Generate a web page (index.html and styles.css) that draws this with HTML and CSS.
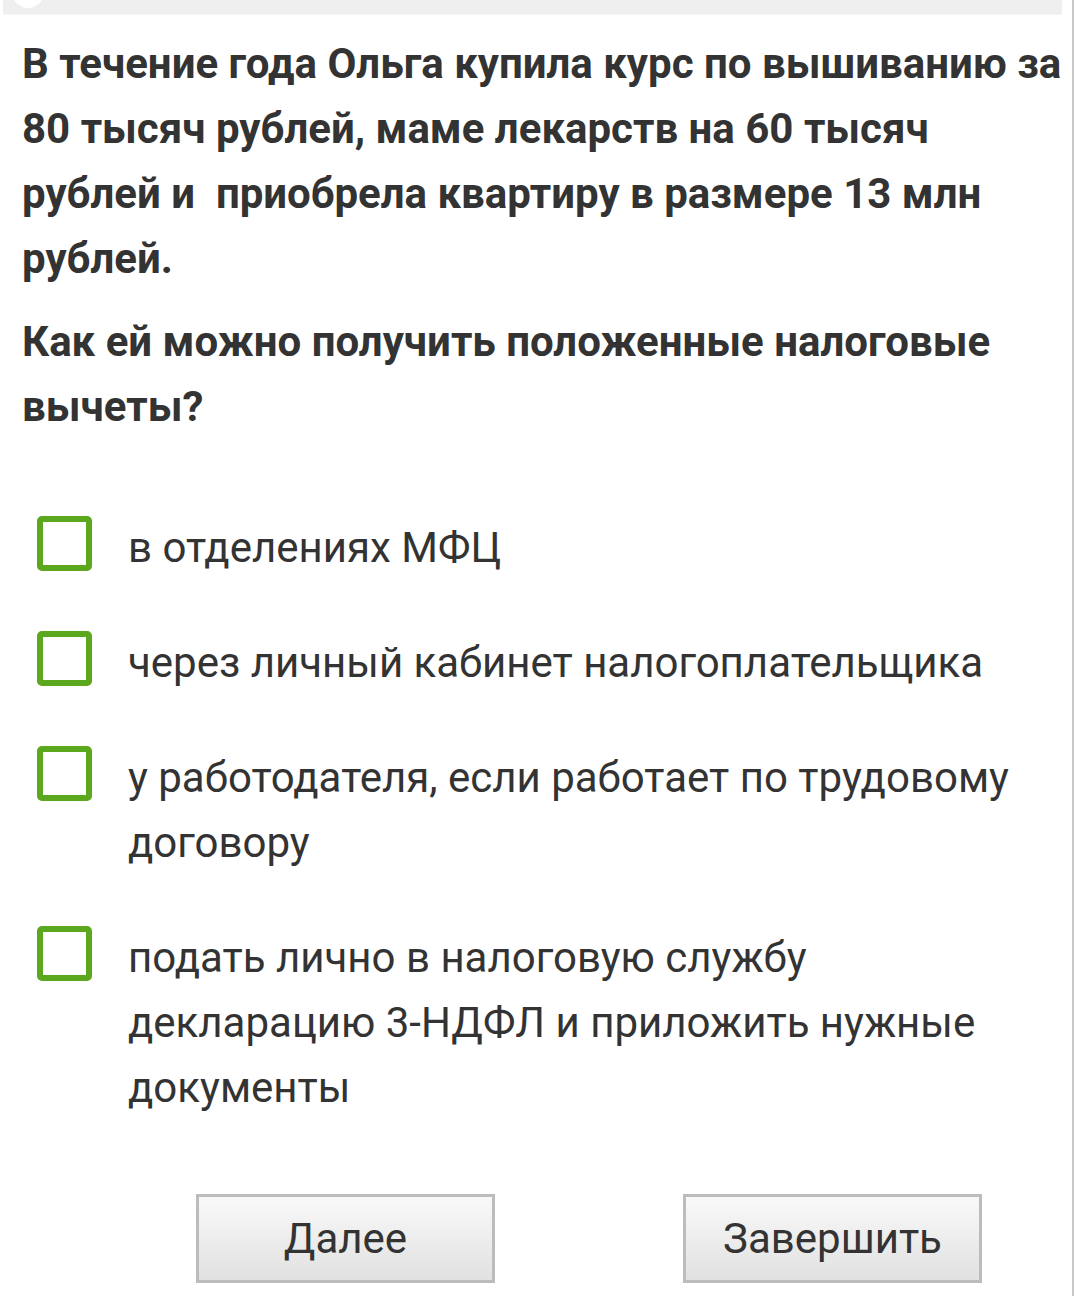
FILE: index.html
```html
<!DOCTYPE html>
<html lang="ru">
<head>
    <meta charset="UTF-8">
    <meta name="viewport" content="width=device-width, initial-scale=1.0">
    <title>Тест: налоговые вычеты</title>
    <link rel="stylesheet" href="styles.css">
</head>
<body>

    <div class="page">
        <!-- Header strip -->
        <div class="topbar">
            <span class="avatar"></span>
        </div>

        <!-- Question -->
        <div class="question">
            <p>В течение года Ольга купила курс по вышиванию за 80 тысяч рублей, маме лекарств на 60 тысяч рублей и&nbsp; приобрела квартиру в размере 13 млн рублей.</p>
            <p>Как ей можно получить положенные налоговые вычеты?</p>
        </div>

        <!-- Answers -->
        <ul class="answers">
            <li><span class="check"></span><span class="answer-text">в отделениях МФЦ</span></li>
            <li><span class="check"></span><span class="answer-text">через личный кабинет налогоплательщика</span></li>
            <li><span class="check"></span><span class="answer-text">у работодателя, если работает по трудовому договору</span></li>
            <li><span class="check"></span><span class="answer-text">подать лично в налоговую службу декларацию 3-НДФЛ и приложить нужные документы</span></li>
        </ul>

        <!-- Buttons -->
        <div class="buttons">
            <button class="btn">Далее</button>
            <button class="btn">Завершить</button>
        </div>
    </div>

</body>
</html>
```

FILE: styles.css
```css
/* General Styling */
body {
    font-family: 'Roboto', 'Liberation Sans', sans-serif;
    margin: 0;
    padding: 0;
    background-color: #ffffff;
    color: #333333;
}

.page {
    min-height: 1296px;
    border-right: 2px solid #c8c8c8;
    box-sizing: border-box;
}

/* Header strip */
.topbar {
    position: relative;
    height: 14px;
    margin: 0 10px 0 3px;
    background: #efefef;
    border-bottom: 1px solid #f6f6f6;
    overflow: hidden;
}

.avatar {
    position: absolute;
    left: 9px;
    top: -24px;
    width: 32px;
    height: 32px;
    border-radius: 50%;
    background: #ffffff;
}

/* Question */
.question {
    padding: 16px 10px 0 22px;
}

.question p {
    margin: 0 0 18px;
    font-size: 42px;
    font-weight: 700;
    line-height: 65px;
}

/* Answers */
.answers {
    list-style: none;
    margin: 76px 0 0;
    padding: 0 40px 0 37px;
    display: flex;
    flex-direction: column;
    gap: 50px;
}

.answers li {
    display: flex;
    align-items: flex-start;
    gap: 36px;
}

.check {
    flex: none;
    width: 55px;
    height: 55px;
    margin-top: 1px;
    border: 6px solid #5ba81e;
    border-radius: 5px;
    box-sizing: border-box;
    background: #ffffff;
}

.answer-text {
    font-size: 42px;
    line-height: 65px;
}

/* Buttons */
.buttons {
    display: flex;
    gap: 188px;
    padding: 74px 0 0 196px;
}

.btn {
    width: 299px;
    height: 89px;
    border: 3px solid #bcbcbc;
    border-radius: 0;
    background: linear-gradient(#f9f9f9, #e1e1e1);
    font-family: 'Roboto', 'Liberation Sans', sans-serif;
    font-size: 42px;
    color: #333333;
}
```
